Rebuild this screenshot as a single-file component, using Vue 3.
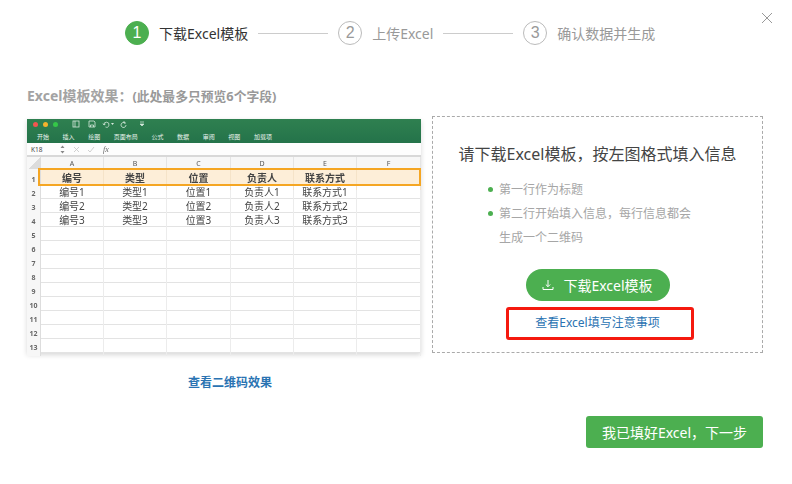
<template>
  <div class="dialog">
    <button class="close">
      <svg width="12" height="12" viewBox="0 0 12 12"><path d="M1 1l10 10M11 1L1 11" stroke="#999" stroke-width="1" fill="none" /></svg>
    </button>

    <div class="steps">
      <template v-for="(s, i) in steps" :key="s">
        <div v-if="i > 0" class="step-line"></div>
        <div class="step" :class="{ active: i === 0 }">
          <span class="step-num">{{ i + 1 }}</span>
          <span class="step-name">{{ s }}</span>
        </div>
      </template>
    </div>

    <h4 class="preview-title">Excel模板效果：<small>(此处最多只预览6个字段)</small></h4>

    <div class="body">
      <div class="left">
        <div class="sheet">
          <div class="ribbon">
            <div class="win-bar">
              <i class="dot red"></i><i class="dot yellow"></i><i class="dot green"></i>
              <svg class="qa" width="62" height="8" viewBox="0 0 62 8">
                <g fill="none" stroke="#d6e8dc" stroke-width="0.8">
                  <rect x="1" y="1" width="6" height="6" />
                  <path d="M3 1v6" />
                  <path d="M17 1h5l1 1v5h-6zM18.500 7V5h3v2" />
                  <path d="M32 5a2.500 2.500 0 1 1 1.500 2M31 3.500l1 1.500 1.500-1" />
                  <path d="M53 3a2.500 2.500 0 1 0 1 2M52 1v2h2" />
                </g>
                <path d="M39 3h3l-1.500 2z" fill="#d6e8dc" />
              </svg>
              <svg class="qa-more" width="6" height="6" viewBox="0 0 6 6">
                <path d="M1 1h4M1 3h4l-2 2z" stroke="#d6e8dc" stroke-width="0.7" fill="#d6e8dc" />
              </svg>
            </div>
            <div class="tabs">
              <span v-for="t in tabs" :key="t">{{ t }}</span>
            </div>
          </div>
          <div class="formula">
            <span class="cell-name">K18</span>
            <svg class="fx-icon" width="5" height="9" viewBox="0 0 5 9"><path d="M2.500 0.500L4.500 3h-4zM2.500 8.500L4.500 6h-4z" fill="#888" /></svg>
            <svg class="fx-icon cancel" width="7" height="7" viewBox="0 0 7 7"><path d="M1 1l5 5M6 1L1 6" stroke="#c4c4c4" stroke-width="0.8" fill="none" /></svg>
            <svg class="fx-icon check" width="8" height="7" viewBox="0 0 8 7"><path d="M1 4l2 2 4-5" stroke="#c4c4c4" stroke-width="0.8" fill="none" /></svg>
            <em>fx</em>
          </div>
          <div class="grid-head row-grid">
            <div class="corner"></div>
            <div v-for="c in cols" :key="c" class="col-name">{{ c }}</div>
          </div>
          <div
            v-for="(r, i) in rows"
            :key="i"
            class="row-grid data-row"
            :class="{ first: i === 0 }"
          >
            <div class="row-no">{{ i + 1 }}</div>
            <div v-for="c in 6" :key="c" class="cell">{{ r[c - 1] }}</div>
          </div>
        </div>
        <a class="qr-link">查看二维码效果</a>
      </div>

      <div class="right">
        <h3>请下载Excel模板，按左图格式填入信息</h3>
        <ul>
          <li>第一行作为标题</li>
          <li>第二行开始填入信息，每行信息都会<br />生成一个二维码</li>
        </ul>
        <button class="download">
          <svg width="12" height="12" viewBox="0 0 12 12"><path d="M6 1v6.500M3.800 5.500L6 7.700l2.200-2.200M1 8v2.500h10V8" stroke="#fff" stroke-width="1" fill="none" /></svg>
          下载Excel模板
        </button>
        <a class="notes">查看Excel填写注意事项</a>
      </div>
    </div>

    <div class="footer">
      <button class="next">我已填好Excel，下一步</button>
    </div>
  </div>
</template>

<script setup>
const steps = ['下载Excel模板', '上传Excel', '确认数据并生成']
const tabs = ['开始', '插入', '绘图', '页面布局', '公式', '数据', '审阅', '视图', '加载项']
const cols = ['A', 'B', 'C', 'D', 'E', 'F']

const rows = [
  ['编号', '类型', '位置', '负责人', '联系方式', ''],
  ['编号1', '类型1', '位置1', '负责人1', '联系方式1', ''],
  ['编号2', '类型2', '位置2', '负责人2', '联系方式2', ''],
  ['编号3', '类型3', '位置3', '负责人3', '联系方式3', ''],
]
for (let i = 0; i < 9; i++) rows.push(['', '', '', '', '', ''])
</script>

<style>
html,
body {
  margin: 0;
  background: #fff;
}
</style>

<style scoped>
.dialog {
  position: relative;
  width: 792px;
  height: 484px;
  box-sizing: border-box;
  padding: 21px 29px 0 27px;
  overflow: hidden;
  background: #fff;
  font-family: "Noto Sans", "Noto Sans CJK SC", sans-serif;
  color: #333;
}

.close {
  position: absolute;
  top: 12px;
  right: 19px;
  padding: 0;
  border: 0;
  background: none;
  line-height: 0;
}

.steps {
  display: flex;
  align-items: center;
  height: 24px;
  padding-left: 98px;
}

.step {
  display: flex;
  align-items: center;
  color: #999;
  font-size: 14px;
}

.step-num {
  display: flex;
  align-items: center;
  justify-content: center;
  width: 24px;
  height: 24px;
  margin-right: 10px;
  box-sizing: border-box;
  border: 1px solid #bbb;
  border-radius: 50%;
  font-family: "Liberation Sans", sans-serif;
  font-size: 16px;
  color: #999;
}

.step.active {
  color: #333;
}

.step.active .step-num {
  border-color: #4caf50;
  background: #4caf50;
  color: #fff;
}

.step-line {
  width: 70px;
  height: 1px;
  margin: 0 10px;
  background: #ccc;
}

.preview-title {
  margin: 41px 0 0;
  height: 20px;
  line-height: 20px;
  font-size: 14px;
  font-weight: 700;
  color: #a3a3a3;
}

.preview-title small {
  font-size: 12.800px;
  color: #999;
}

.body {
  display: flex;
  align-items: flex-start;
  margin-top: 13px;
}

.left {
  width: 394px;
  margin-right: 11px;
  text-align: center;
}

.sheet {
  position: relative;
  height: 234px;
  background: #fff;
  box-shadow: 0 2px 5px rgba(0, 0, 0, 0.16);
  text-align: left;
  filter: blur(0.25px);
}

.ribbon {
  height: 24px;
  box-sizing: border-box;
  padding-left: 6px;
  background: linear-gradient(#2f8050, #24734a);
}

.win-bar {
  display: flex;
  align-items: center;
  height: 10px;
}

.dot {
  width: 5px;
  height: 5px;
  margin-right: 5px;
  border-radius: 50%;
}

.red { background: #f2564f; }
.yellow { background: #f4b32d; }
.green { background: #35c748; }

.qa {
  margin-left: 9px;
}

.qa-more {
  margin-left: 5px;
}

.tabs {
  display: flex;
  gap: 13.600px;
  margin-top: 2px;
  padding-left: 4px;
  height: 12px;
  line-height: 12px;
  font-size: 6px;
  color: #eaf4ee;
}

.formula {
  display: flex;
  align-items: center;
  height: 14px;
  box-sizing: border-box;
  padding-left: 4px;
  background: #fdfdfd;
  border-bottom: 2px solid #d8d8d8;
  font-size: 6.500px;
  color: #444;
}

.cell-name {
  width: 29px;
}

.fx-icon {
  flex: none;
}

.cancel {
  margin-left: 8px;
}

.check {
  margin-left: 7px;
}

.formula em {
  margin-left: 8px;
  font-family: "Liberation Serif", serif;
  font-size: 8px;
  color: #666;
}

.row-grid {
  display: grid;
  grid-template-columns: 14px 63px 63px 64px 63px 63px 64px;
}

.grid-head {
  height: 12px;
  background: #f7f7f7;
}

.corner {
  background: linear-gradient(135deg, #f7f7f7 50%, #dcdcdc 50%);
  border-right: 1px solid #ddd;
}

.col-name {
  line-height: 14px;
  text-align: center;
  font-size: 7px;
  color: #555;
  border-right: 1px solid #e4e4e4;
}

.data-row {
  height: 14px;
  box-sizing: border-box;
  border-bottom: 1px solid #e3e3e3;
}

.row-no {
  line-height: 17px;
  text-align: center;
  font-size: 7px;
  font-weight: 700;
  color: #666;
  background: #f7f7f7;
  border-right: 1px solid #ddd;
}

.cell {
  line-height: 14px;
  text-align: center;
  font-size: 10px;
  color: #444;
  border-right: 1px solid #ececec;
  box-sizing: border-box;
}

.data-row.first {
  position: relative;
  height: 16px;
  background: linear-gradient(90deg, #f7f7f7 14px, #fdeed8 14px);
}

.data-row.first::after {
  content: "";
  position: absolute;
  top: -1px;
  left: 11px;
  right: 0;
  bottom: -2px;
  border: 2px solid #f5a623;
  pointer-events: none;
}

.data-row.first .row-no {
  line-height: 21px;
}

.data-row.first .cell {
  line-height: 19px;
  font-weight: 700;
  border-right-color: #f5e3c8;
}

.qr-link {
  display: block;
  margin-top: 21px;
  padding-left: 12px;
  line-height: 18px;
  font-size: 12px;
  font-weight: 700;
  color: #2a73b2;
}

.right {
  display: flex;
  flex-direction: column;
  align-items: center;
  width: 331px;
  height: 237px;
  box-sizing: border-box;
  border: 1px dashed #aaa;
  padding-top: 26px;
  background: #fff;
  margin-top: -3px;
}

.right h3 {
  margin: 0;
  line-height: 22px;
  font-size: 16px;
  font-weight: 400;
  color: #444;
}

.right ul {
  align-self: flex-start;
  margin: 13px 0 0;
  padding: 0 0 0 66px;
  list-style: none;
  font-size: 12px;
  line-height: 24px;
  color: #a6a6a6;
}

.right li {
  position: relative;
}

.right li::before {
  content: "";
  position: absolute;
  top: 9px;
  left: -11px;
  width: 5px;
  height: 5px;
  border-radius: 50%;
  background: #4caf50;
}

.download {
  display: flex;
  align-items: center;
  justify-content: center;
  gap: 9px;
  width: 144px;
  height: 32px;
  margin-top: 19px;
  padding: 0;
  border: 0;
  border-radius: 16px;
  background: #4caf50;
  color: #fff;
  font-family: inherit;
  font-size: 14px;
}

.notes {
  width: 188px;
  height: 33px;
  margin: 6px 0 0 4px;
  padding-right: 4px;
  box-sizing: border-box;
  border: 3px solid #f5190f;
  border-radius: 3px;
  line-height: 25px;
  text-align: center;
  font-size: 12px;
  color: #2a73b2;
}

.footer {
  display: flex;
  justify-content: flex-end;
  margin-top: 24px;
}

.next {
  width: 177px;
  height: 32px;
  padding: 0;
  border: 0;
  border-radius: 3px;
  background: #4caf50;
  color: #fff;
  font-family: inherit;
  font-size: 14px;
}
</style>
